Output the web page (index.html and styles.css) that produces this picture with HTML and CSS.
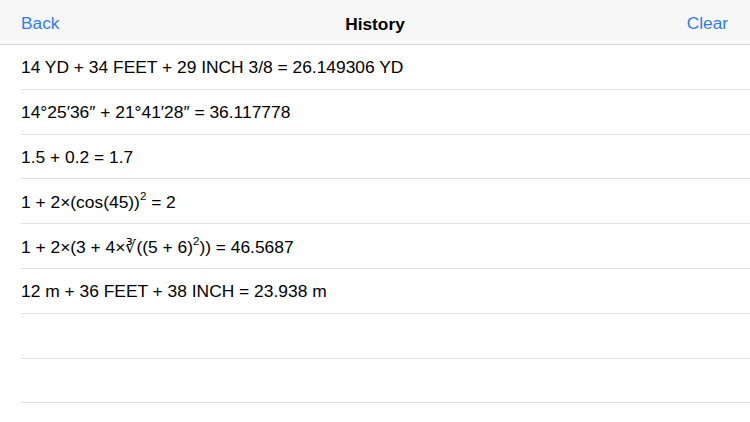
FILE: index.html
```html
<!DOCTYPE html>
<html>
<head>
<meta charset="utf-8">
<link rel="stylesheet" href="styles.css">
</head>
<body>
<header class="nav">
  <span class="nav-btn">Back</span>
  <span class="nav-title">History</span>
  <span class="nav-btn">Clear</span>
</header>
<ul class="list">
  <li class="row">14 YD + 34 FEET + 29 INCH 3/8 = 26.149306 YD</li>
  <li class="row">14°25′36″ + 21°41′28″ = 36.117778</li>
  <li class="row">1.5 + 0.2 = 1.7</li>
  <li class="row">1 + 2×(cos(45))<sup>2</sup> = 2</li>
  <li class="row">1 + 2×(3 + 4×∛((5 + 6)<sup>2</sup>)) = 46.5687</li>
  <li class="row">12 m + 36 FEET + 38 INCH = 23.938 m</li>
  <li class="row"></li>
  <li class="row"></li>
</ul>
</body>
</html>
```
FILE: styles.css
```css
html, body {
  margin: 0;
  padding: 0;
  background: #ffffff;
  font-family: "Liberation Sans", Arial, sans-serif;
  color: #000;
  width: 750px;
  height: 422px;
  overflow: hidden;
}
.nav {
  height: 44px;
  background: #f7f7f7;
  border-bottom: 1px solid #d6d6d6;
  display: flex;
  align-items: center;
  justify-content: space-between;
  padding: 2px 22px 0 21px;
  box-sizing: border-box;
  height: 45px;
  position: relative;
}
.nav-btn {
  color: #2f7bf5;
  font-size: 17.3px;
}
.nav-title {
  position: absolute;
  left: 0;
  right: 0;
  padding-top: 2px;
  text-align: center;
  font-weight: bold;
  font-size: 17.3px;
  pointer-events: none;
}
.list {
  list-style: none;
  margin: 0;
  padding: 0 0 0 21px;
}
.row {
  height: 43.8px;
  border-bottom: 1px solid #e0e0e0;
  display: flex;
  align-items: center;
  padding-top: 2px;
  box-sizing: border-box;
  height: 44.8px;
  font-size: 17.4px;
  white-space: pre;
}
.row sup {
  font-size: 11.5px;
  line-height: 0;
  position: relative;
  top: -6px;
  vertical-align: baseline;
}
```
